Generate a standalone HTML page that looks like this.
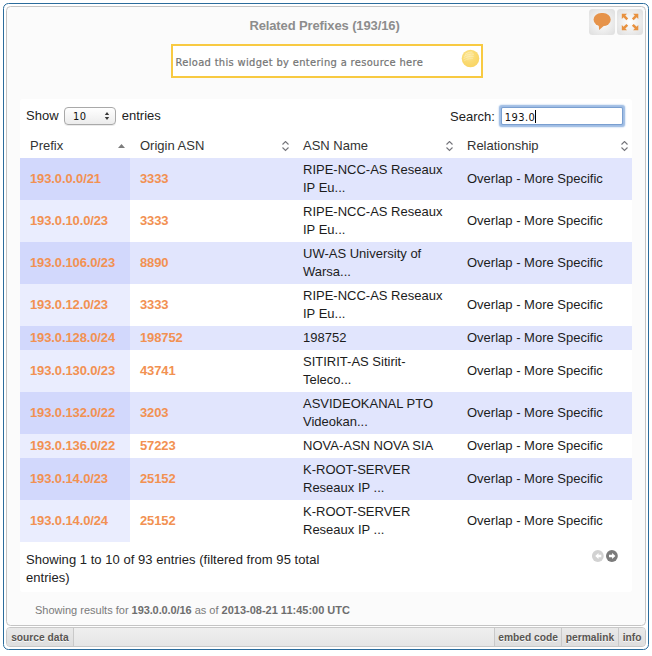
<!DOCTYPE html>
<html>
<head>
<meta charset="utf-8">
<title>Related Prefixes</title>
<style>
html,body{margin:0;padding:0;background:#fff;}
body{width:652px;height:656px;position:relative;overflow:hidden;font-family:"Liberation Sans",Arial,sans-serif;font-size:13px;color:#222;}
.abs{position:absolute;}
#outer{left:3px;top:3px;width:646px;height:647px;border:1.5px solid #2b6c9c;border-radius:5.5px;box-sizing:border-box;}
#inner{left:6px;top:6px;width:640px;height:620px;border:1px solid #c4c4c4;border-radius:4.5px;box-sizing:border-box;background:#fbfbfb;}
#title{left:249.4px;top:18.7px;text-align:left;white-space:nowrap;letter-spacing:-0.12px;font-weight:bold;font-size:13px;color:#8d8d8d;line-height:14px;}
.tbtn{top:9px;width:26px;height:26px;border-radius:3.5px;background:radial-gradient(circle at 50% 50%,#ffffff 0%,#f1f1f1 40%,#e2e2e2 85%,#dedede 100%);}
#resbox{left:171px;top:44px;width:312px;height:34px;box-sizing:border-box;border:2px solid #f8ca42;background:#fff;}
#resbox span{position:absolute;left:2.5px;top:9.5px;letter-spacing:0.34px;font-family:"DejaVu Sans Condensed","DejaVu Sans",sans-serif;font-size:11px;color:#747474;-webkit-text-stroke:0.2px #747474;white-space:nowrap;line-height:14px;}
#panel{left:20px;top:99px;width:612px;height:493px;background:#fff;border-radius:3px;}
#show{left:26px;top:108px;line-height:16px;color:#222;white-space:nowrap;}
#sel{left:64px;top:107px;width:52px;height:17.6px;box-sizing:border-box;border:1px solid #a9a9a9;border-radius:4px;background:linear-gradient(#ffffff,#ececec);box-shadow:0 1px 0 rgba(0,0,0,0.08);}
#sel span{position:absolute;left:8px;top:2px;letter-spacing:0.5px;font-family:"DejaVu Sans Condensed","DejaVu Sans",sans-serif;font-size:11px;line-height:14px;color:#111;}
#searchlbl{left:450px;top:109px;line-height:16px;white-space:nowrap;}
#sinput{left:502.3px;top:108.2px;width:119.5px;height:16.3px;background:#fff;border-radius:1px;box-shadow:0 0 0 1px #7a9fd0,0 0 1.2px 2.3px #9fbde4,0 0 2px 3px #c9dbf1;}
#sinput span{position:absolute;left:2.5px;top:2.7px;letter-spacing:0.4px;font-family:"DejaVu Sans Condensed","DejaVu Sans",sans-serif;font-size:11px;line-height:14px;color:#111;}
#sinput i{position:absolute;left:32.5px;top:2.2px;width:1px;height:12.5px;background:#000;}
table{position:absolute;left:20px;top:134px;width:612px;border-collapse:collapse;table-layout:fixed;}
th{height:22px;padding:0 0 2px 10px;text-align:left;font-weight:normal;color:#333;font-size:13px;position:relative;}
td{padding:0 0 0 10px;vertical-align:middle;line-height:18px;font-size:13px;color:#1c1c1c;}
tr.two td{height:42px;}
tr.one td{height:24px;}
tr.odd td{background:#e1e5fd;}
tr.even td{background:#fff;}
tr.odd td.s1{background:#d2d8fc;}
tr.even td.s1{background:#eaedfe;}
td a{color:#f29152;font-weight:bold;text-decoration:none;letter-spacing:-0.12px;}
.sorticon{position:absolute;right:3px;top:7px;width:9px;height:11px;}
#info{left:26px;top:551px;width:320px;line-height:18px;color:#222;letter-spacing:0.04px;}
#res{left:35px;top:603px;font-size:11px;color:#7a7a7a;line-height:14px;white-space:nowrap;}
#res b{color:#6e6e6e;letter-spacing:-0.1px;}
#fbar{left:6px;top:627px;width:640px;height:20px;box-sizing:border-box;border:1px solid #c8c8c8;border-radius:4px;background:linear-gradient(#efefef,#e6e6e6);}
.fb{text-shadow:0 1px 0 rgba(255,255,255,0.8);top:628px;height:18px;line-height:18px;font-size:11px;font-weight:bold;color:#585552;text-align:center;border-right:1px solid #c9c9c9;box-sizing:border-box;white-space:nowrap;background:linear-gradient(#e9e9e9,#dedede);}
.fb span{display:inline-block;transform:scaleX(0.93);transform-origin:50% 50%;}
</style>
</head>
<body>
<div id="outer" class="abs"></div>
<div id="inner" class="abs"></div>
<div id="title" class="abs">Related Prefixes (193/16)</div>

<div class="abs tbtn" style="left:589px">
<svg width="26" height="26" viewBox="0 0 26 26"><rect x="4.6" y="4.1" width="17.1" height="13" rx="7.6" ry="6.3" fill="#e6934a"/><path d="M9.6 15 L10.1 21 L16.5 15.5 Z" fill="#e6934a"/></svg>
</div>
<div class="abs tbtn" style="left:617px">
<svg width="26" height="26" viewBox="0 0 26 26" fill="#e8913f">
<path id="arw" d="M4.8 4.8 L10 4.8 L8.3 6.5 L11.2 9.4 L9.4 11.2 L6.5 8.3 L4.8 10 Z"/>
<path transform="translate(26.1,0) scale(-1,1)" d="M4.8 4.8 L10 4.8 L8.3 6.5 L11.2 9.4 L9.4 11.2 L6.5 8.3 L4.8 10 Z"/>
<path transform="translate(0,26.1) scale(1,-1)" d="M4.8 4.8 L10 4.8 L8.3 6.5 L11.2 9.4 L9.4 11.2 L6.5 8.3 L4.8 10 Z"/>
<path transform="translate(26.1,26.1) scale(-1,-1)" d="M4.8 4.8 L10 4.8 L8.3 6.5 L11.2 9.4 L9.4 11.2 L6.5 8.3 L4.8 10 Z"/>
</svg>
</div>

<div id="resbox" class="abs"><span>Reload this widget by entering a resource here</span>
<svg class="abs" style="left:287.8px;top:3.3px" width="19" height="19" viewBox="0 0 19 19"><defs><radialGradient id="gl" cx="0.42" cy="0.36" r="0.62"><stop offset="0" stop-color="#fce7a0"/><stop offset="0.55" stop-color="#fadb74"/><stop offset="1" stop-color="#f9d566"/></radialGradient></defs><circle cx="9.5" cy="9.5" r="8.8" fill="url(#gl)"/><g stroke="#fdf0bd" stroke-width="0.8" fill="none" stroke-dasharray="1.6 1.1" stroke-linecap="round"><path d="M4.5 5.2Q8 2.6 11.5 3.2"/><path d="M3.2 7.4Q7.5 4.6 12.6 5.2"/><path d="M2.8 9.6Q7.5 6.8 13 7.4"/><path d="M3.6 11.6Q7.5 9.2 11.5 9.6" stroke-opacity="0.7"/></g></svg>
</div>

<div id="panel" class="abs"></div>
<div id="show" class="abs">Show <span style="display:inline-block;width:56px"></span> entries</div>
<div id="sel" class="abs"><span>10</span>
<svg class="abs" style="left:38.5px;top:3.1px" width="6" height="10" viewBox="0 0 6 10"><path d="M3 1L5.2 4H0.8Z M3 9L5.2 6H0.8Z" fill="#3a3a3a"/></svg>
</div>
<div id="searchlbl" class="abs">Search:</div>
<div id="sinput" class="abs"><span>193.0</span><i></i></div>

<table>
<colgroup><col style="width:110px"><col style="width:163px"><col style="width:164px"><col style="width:175px"></colgroup>
<thead><tr>
<th>Prefix<svg class="sorticon" style="right:4px" viewBox="0 0 9 11"><path d="M1 7L4.5 3L8 7Z" fill="#7c7c7c"/></svg></th>
<th>Origin ASN<svg class="sorticon" viewBox="0 0 9 11"><path d="M1.5 3.5L4.5 0.5L7.5 3.5M1.5 6.5L4.5 9.5L7.5 6.5" fill="none" stroke="#74747a" stroke-width="1.1"/></svg></th>
<th>ASN Name<svg class="sorticon" viewBox="0 0 9 11"><path d="M1.5 3.5L4.5 0.5L7.5 3.5M1.5 6.5L4.5 9.5L7.5 6.5" fill="none" stroke="#74747a" stroke-width="1.1"/></svg></th>
<th>Relationship<svg class="sorticon" viewBox="0 0 9 11"><path d="M1.5 3.5L4.5 0.5L7.5 3.5M1.5 6.5L4.5 9.5L7.5 6.5" fill="none" stroke="#74747a" stroke-width="1.1"/></svg></th>
</tr></thead>
<tbody>
<tr class="odd two"><td class="s1"><a>193.0.0.0/21</a></td><td><a>3333</a></td><td>RIPE-NCC-AS Reseaux IP Eu...</td><td>Overlap - More Specific</td></tr>
<tr class="even two"><td class="s1"><a>193.0.10.0/23</a></td><td><a>3333</a></td><td>RIPE-NCC-AS Reseaux IP Eu...</td><td>Overlap - More Specific</td></tr>
<tr class="odd two"><td class="s1"><a>193.0.106.0/23</a></td><td><a>8890</a></td><td>UW-AS University of Warsa...</td><td>Overlap - More Specific</td></tr>
<tr class="even two"><td class="s1"><a>193.0.12.0/23</a></td><td><a>3333</a></td><td>RIPE-NCC-AS Reseaux IP Eu...</td><td>Overlap - More Specific</td></tr>
<tr class="odd one"><td class="s1"><a>193.0.128.0/24</a></td><td><a>198752</a></td><td>198752</td><td>Overlap - More Specific</td></tr>
<tr class="even two"><td class="s1"><a>193.0.130.0/23</a></td><td><a>43741</a></td><td>SITIRIT-AS Sitirit-<br>Teleco...</td><td>Overlap - More Specific</td></tr>
<tr class="odd two"><td class="s1"><a>193.0.132.0/22</a></td><td><a>3203</a></td><td>ASVIDEOKANAL PTO Videokan...</td><td>Overlap - More Specific</td></tr>
<tr class="even one"><td class="s1"><a>193.0.136.0/22</a></td><td><a>57223</a></td><td>NOVA-ASN NOVA SIA</td><td>Overlap - More Specific</td></tr>
<tr class="odd two"><td class="s1"><a>193.0.14.0/23</a></td><td><a>25152</a></td><td>K-ROOT-SERVER Reseaux IP ...</td><td>Overlap - More Specific</td></tr>
<tr class="even two"><td class="s1"><a>193.0.14.0/24</a></td><td><a>25152</a></td><td>K-ROOT-SERVER Reseaux IP ...</td><td>Overlap - More Specific</td></tr>
</tbody>
</table>

<div id="info" class="abs">Showing 1 to 10 of 93 entries (filtered from 95 total entries)</div>
<svg class="abs" style="left:591px;top:550px" width="28" height="12" viewBox="0 0 28 12">
<circle cx="6.85" cy="6" r="5.9" fill="#d2d2d2"/><path d="M4.2 6L7.5 2.9V4.8H10.3V7.2H7.5V9.1Z" fill="#fff"/>
<circle cx="20.9" cy="6" r="5.9" fill="#7b7b7b"/><path d="M24.4 6L21.1 2.9V4.8H18V7.2H21.1V9.1Z" fill="#fff"/>
</svg>

<div id="res" class="abs">Showing results for <b>193.0.0.0/16</b> as of <b style="letter-spacing:0">2013-08-21 11:45:00 UTC</b></div>

<div id="fbar" class="abs"></div>
<div class="abs fb" style="left:7px;width:67px;border-radius:3px 0 0 3px"><span>source data</span></div>
<div class="abs fb" style="left:494px;width:68px;border-left:1px solid #c9c9c9"><span>embed code</span></div>
<div class="abs fb" style="left:562px;width:57px"><span>permalink</span></div>
<div class="abs fb" style="left:619px;width:26px;border-right:none;border-radius:0 3px 3px 0"><span>info</span></div>
</body>
</html>
